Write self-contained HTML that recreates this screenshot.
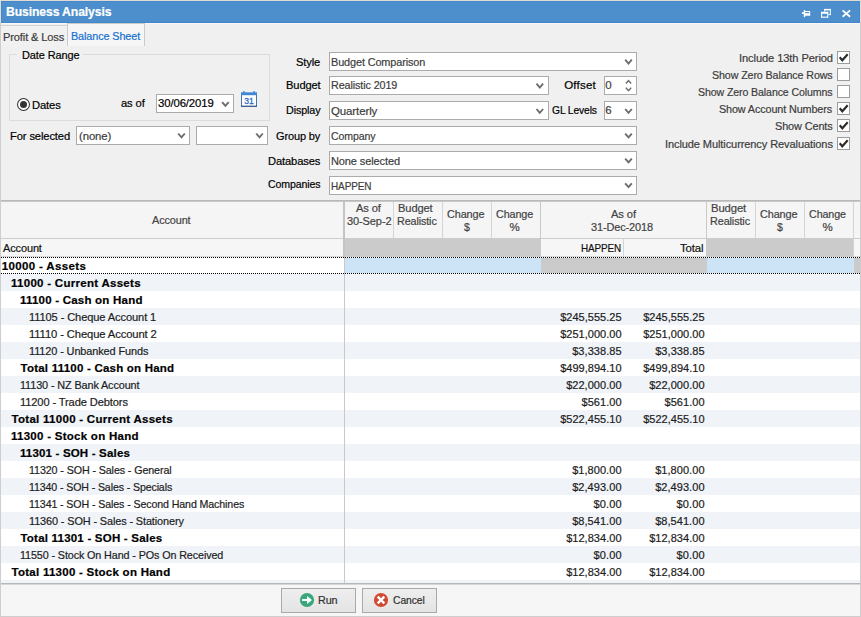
<!DOCTYPE html>
<html>
<head>
<meta charset="utf-8">
<title>Business Analysis</title>
<style>
html,body{margin:0;padding:0;}
body{width:861px;height:617px;overflow:hidden;position:relative;background:#f0f0f0;
  font-family:"Liberation Sans",sans-serif;font-size:11.5px;}
div,span,svg{position:absolute;box-sizing:border-box;}
.t{white-space:pre;line-height:14px;height:14px;transform-origin:0 0;-webkit-text-stroke:0.2px currentColor;}
.win{left:0;top:0;width:861px;height:617px;border:1px solid #cecece;border-top-color:#e2dbd4;z-index:50;}
.wint{left:0;top:0;width:861px;height:23px;border-left:1px solid #e2dbd4;border-right:1px solid #e2dbd4;z-index:51;}
.title{left:1px;top:1px;width:859px;height:22px;background:#4d8fcc;border:1px solid #4688cb;border-bottom-color:#4185cb;}
.hl{left:1px;top:23px;width:859px;height:1px;background:#fbf8f4;}
.tab1{left:1px;top:25px;width:67px;height:21px;border-top:1px solid #d2d2d2;background:#f1f1f1;}
.tab2{left:67px;top:23px;width:78px;height:23px;border:1px solid #cbcbcb;border-bottom:none;background:#f6f6f6;}
.grp{left:9px;top:54px;width:261px;height:67px;border:1px solid #dcdcdc;}
.grpcap{left:17px;top:50px;width:66px;height:10px;background:#f0f0f0;}
.in{background:#fff;border:1px solid #ababab;height:19px;}
.cb{width:13px;height:13px;left:837px;background:#fff;border:1px solid #9c9c9c;}
.radio{left:17px;top:98px;width:13px;height:13px;border-radius:50%;border:1px solid #333;background:#fff;}
.radio i{position:absolute;left:2.5px;top:2.5px;width:6px;height:6px;border-radius:50%;background:#333;}
.btn{top:588px;width:75px;height:25px;background:linear-gradient(#eeeeee,#e4e4e4);border:1px solid #a9a9a9;}
/* grid */
.ghead{left:1px;top:202px;width:859px;height:36px;background:#f5f5f5;}
.gtop{left:1px;top:200px;width:859px;height:2px;background:linear-gradient(#b9b9b9 50%,#c8c8c8 50%);}
.vl{width:1px;background:#d4d4d4;}
.hlg{height:1px;background:#cdcdcd;}
.gray{background:#cbcbcb;}
.blue{background:#cde4f7;}
.row{left:1px;width:859px;height:17px;background:#fff;}
.row.a{background:#f0f4f9;}
.dot{left:1px;width:859px;height:1px;background:repeating-linear-gradient(90deg,#000 0,#000 1px,transparent 1px,transparent 2px);}
</style>
</head>
<body>
<div class="title"></div>
<div class="hl"></div>
<div class="tab1"></div>
<div class="tab2"></div>

<!-- title icons -->
<svg style="left:0;top:0" width="861" height="24" viewBox="0 0 861 24">
  <g fill="#fff">
    <!-- pin -->
    <rect x="801.9" y="12.3" width="3" height="1.7"/>
    <rect x="803.8" y="10.1" width="1.4" height="7"/>
    <rect x="805" y="11" width="5.1" height="1"/>
    <rect x="809.1" y="11" width="1" height="4.7"/>
    <rect x="805" y="13.2" width="5.1" height="2.5"/>
    <!-- restore -->
    <rect x="824.2" y="8.9" width="6.6" height="1.5"/>
    <rect x="829.8" y="8.9" width="1" height="6.2"/>
    <rect x="824.2" y="8.9" width="1" height="2.9"/>
    <rect x="828.2" y="14.2" width="2.6" height="0.9"/>
    <rect x="821.1" y="11.8" width="7.1" height="2"/>
    <rect x="821.1" y="16.6" width="7.1" height="1.1"/>
    <rect x="821.1" y="11.8" width="1" height="5.9"/>
    <rect x="827.2" y="11.8" width="1" height="5.9"/>
  </g>
  <!-- close -->
  <path d="M842.6 10.4L850.1 16.7 M850.1 10.4L842.6 16.7" fill="none" stroke="#fff" stroke-width="1.8"/>
</svg>

<!-- group box -->
<div class="grp"></div>
<div class="grpcap"></div>
<svg style="left:15px;top:96px" width="17" height="17" viewBox="0 0 17 17"><circle cx="8.5" cy="8.5" r="5.95" fill="#fff" stroke="#333" stroke-width="1.05"/><circle cx="8.5" cy="8.5" r="3.5" fill="#333"/></svg>

<!-- inputs -->
<div class="in" style="left:156px;top:94px;width:78px"></div>
<div class="in" style="left:76px;top:126px;width:114px"></div>
<div class="in" style="left:196px;top:126px;width:72px"></div>
<div class="in" style="left:329px;top:52px;width:308px"></div>
<div class="in" style="left:329px;top:76px;width:220px"></div>
<div class="in" style="left:329px;top:101px;width:220px"></div>
<div class="in" style="left:329px;top:126px;width:308px"></div>
<div class="in" style="left:329px;top:151px;width:308px"></div>
<div class="in" style="left:329px;top:176px;width:308px"></div>
<div class="in" style="left:604px;top:76px;width:33px"></div>
<div class="in" style="left:604px;top:101px;width:33px"></div>

<svg style="left:0;top:0" width="861" height="200" viewBox="0 0 861 200"><path d="M222.10 102.10L225.40 105.90L228.70 102.10" fill="none" stroke="#6c6c6c" stroke-width="1.9"/><path d="M178.20 133.50L181.50 137.30L184.80 133.50" fill="none" stroke="#6c6c6c" stroke-width="1.9"/><path d="M256.20 133.50L259.50 137.30L262.80 133.50" fill="none" stroke="#6c6c6c" stroke-width="1.9"/><path d="M625.20 59.70L628.50 63.50L631.80 59.70" fill="none" stroke="#6c6c6c" stroke-width="1.9"/><path d="M536.50 83.70L539.80 87.50L543.10 83.70" fill="none" stroke="#6c6c6c" stroke-width="1.9"/><path d="M536.50 109.00L539.80 112.80L543.10 109.00" fill="none" stroke="#6c6c6c" stroke-width="1.9"/><path d="M625.20 109.00L628.50 112.80L631.80 109.00" fill="none" stroke="#6c6c6c" stroke-width="1.9"/><path d="M625.20 133.60L628.50 137.40L631.80 133.60" fill="none" stroke="#6c6c6c" stroke-width="1.9"/><path d="M625.20 158.60L628.50 162.40L631.80 158.60" fill="none" stroke="#6c6c6c" stroke-width="1.9"/><path d="M625.20 183.30L628.50 187.10L631.80 183.30" fill="none" stroke="#6c6c6c" stroke-width="1.9"/><path d="M625.90 83.50L628.50 80.50L631.10 83.50" fill="none" stroke="#6c6c6c" stroke-width="1.4"/><path d="M625.90 87.80L628.50 90.80L631.10 87.80" fill="none" stroke="#6c6c6c" stroke-width="1.4"/></svg>

<!-- calendar icon -->
<svg style="left:241px;top:91px" width="17" height="17" viewBox="0 0 17 17">
  <rect x="0.5" y="3.5" width="15" height="12" fill="#fff" stroke="#4a73a8"/>
  <rect x="0" y="14.6" width="16" height="1.4" fill="#3d6296"/>
  <rect x="0" y="1.3" width="16" height="2.9" fill="#3f86d6"/>
  <rect x="2.2" y="0" width="1.4" height="3" fill="#3f86d6"/>
  <rect x="12.4" y="0" width="1.4" height="3" fill="#3f86d6"/>
  <text x="8" y="13.3" font-family="Liberation Sans" font-size="8.5" fill="#2a6cc4" text-anchor="middle" stroke="#2a6cc4" stroke-width="0.3">31</text>
</svg>

<!-- checkboxes -->
<div class="cb" style="top:51px"></div>
<div class="cb" style="top:68px"></div>
<div class="cb" style="top:85px"></div>
<div class="cb" style="top:102px"></div>
<div class="cb" style="top:119px"></div>
<div class="cb" style="top:137px"></div>
<svg style="left:0;top:0" width="861" height="200" viewBox="0 0 861 200"><path d="M839.7 57.3L842.3 60.3L847.7 54.3" fill="none" stroke="#2b2b2b" stroke-width="2.1"/><path d="M839.7 108.3L842.3 111.3L847.7 105.3" fill="none" stroke="#2b2b2b" stroke-width="2.1"/><path d="M839.7 125.3L842.3 128.3L847.7 122.3" fill="none" stroke="#2b2b2b" stroke-width="2.1"/><path d="M839.7 143.3L842.3 146.3L847.7 140.3" fill="none" stroke="#2b2b2b" stroke-width="2.1"/></svg>

<!-- grid -->
<div class="gtop"></div>
<div class="ghead"></div>
<div class="row" style="top:257px;height:17px"></div>
<div class="row a" style="top:274px;height:17px"></div>
<div class="row" style="top:291px;height:17px"></div>
<div class="row a" style="top:308px;height:17px"></div>
<div class="row" style="top:325px;height:17px"></div>
<div class="row a" style="top:342px;height:17px"></div>
<div class="row" style="top:359px;height:17px"></div>
<div class="row a" style="top:376px;height:17px"></div>
<div class="row" style="top:393px;height:17px"></div>
<div class="row a" style="top:410px;height:17px"></div>
<div class="row" style="top:427px;height:17px"></div>
<div class="row a" style="top:444px;height:17px"></div>
<div class="row" style="top:461px;height:17px"></div>
<div class="row a" style="top:478px;height:17px"></div>
<div class="row" style="top:495px;height:17px"></div>
<div class="row a" style="top:512px;height:17px"></div>
<div class="row" style="top:529px;height:17px"></div>
<div class="row a" style="top:546px;height:17px"></div>
<div class="row" style="top:563px;height:17px"></div>
<div class="row a" style="top:580px;height:3px"></div>
<div style="left:1px;top:239px;width:859px;height:18px;background:#f6f6f6;border-bottom:1px solid #d6d6d6"></div>
<div class="hlg" style="left:1px;top:238px;width:859px"></div>
<div class="gray" style="left:345px;top:239px;width:195px;height:18px"></div>
<div class="gray" style="left:707px;top:239px;width:146px;height:18px"></div>
<div class="blue" style="left:345px;top:258px;width:196px;height:15px"></div>
<div class="gray" style="left:541px;top:258px;width:166px;height:15px"></div>
<div class="blue" style="left:707px;top:258px;width:147px;height:15px"></div>
<div class="gray" style="left:854px;top:258px;width:6px;height:15px"></div>
<div class="dot" style="top:257px"></div>
<div class="dot" style="top:273px"></div>
<div class="vl" style="left:393px;top:202px;height:36px"></div>
<div class="vl" style="left:442px;top:202px;height:36px"></div>
<div class="vl" style="left:491px;top:202px;height:36px"></div>
<div class="vl" style="left:755px;top:202px;height:36px"></div>
<div class="vl" style="left:804px;top:202px;height:36px"></div>
<div class="vl" style="left:540px;top:202px;height:55px;background:#c9c9c9"></div>
<div class="vl" style="left:706px;top:202px;height:55px;background:#c9c9c9"></div>
<div class="vl" style="left:853px;top:202px;height:55px"></div>
<div class="vl" style="left:623px;top:239px;height:18px"></div>
<div class="vl" style="left:343px;top:202px;width:2px;height:55px;background:#c4c4c4"></div>
<div class="vl" style="left:344px;top:257px;height:326px;background:#c9c9c9"></div>

<!-- buttons -->
<div style="left:1px;top:583px;width:859px;height:33px;background:#f6f6f6;border-top:1px solid #b7b7b7"></div>
<div class="hlg" style="left:1px;top:584px;width:859px;background:#d6d6d6"></div>
<div class="btn" style="left:281px"></div>
<div class="btn" style="left:362px"></div>
<svg style="left:299px;top:592px" width="16" height="16" viewBox="0 0 16 16">
  <circle cx="8" cy="8" r="7.1" fill="#3aa67c"/>
  <path d="M3.1 7H8.1V4L13 8L8.1 12V9H3.1Z" fill="#fff"/>
</svg>
<svg style="left:373px;top:592px" width="16" height="16" viewBox="0 0 16 16">
  <circle cx="8" cy="8" r="7.1" fill="#d14a31"/>
  <path d="M4.7 4.7L11.3 11.3 M11.3 4.7L4.7 11.3" fill="none" stroke="#fff" stroke-width="2.4"/>
</svg>

<span class="t" style="left:5.88px;top:4.70px;font-size:13px;color:#fff;letter-spacing:-0.120px;transform:scaleX(0.9376);font-weight:bold;">Business Analysis</span>
<span class="t" style="left:2.59px;top:30.02px;font-size:11.5px;color:#3c3c3c;letter-spacing:-0.120px;transform:scaleX(0.9616);">Profit &amp; Loss</span>
<span class="t" style="left:70.61px;top:28.52px;font-size:11.5px;color:#1570cf;letter-spacing:-0.120px;transform:scaleX(0.9428);">Balance Sheet</span>
<span class="t" style="left:22.00px;top:47.72px;font-size:11.5px;color:#000;letter-spacing:-0.120px;transform:scaleX(0.9534);">Date Range</span>
<span class="t" style="left:31.88px;top:97.62px;font-size:11.5px;color:#000;letter-spacing:-0.120px;transform:scaleX(0.9751);">Dates</span>
<span class="t" style="left:121.23px;top:95.82px;font-size:11.5px;color:#000;letter-spacing:-0.120px;transform:scaleX(0.9716);">as of</span>
<span class="t" style="left:158.17px;top:96.22px;font-size:11.5px;color:#000;letter-spacing:-0.120px;transform:scaleX(0.9875);">30/06/2019</span>
<span class="t" style="left:9.68px;top:128.72px;font-size:11.5px;color:#000;letter-spacing:-0.120px;transform:scaleX(0.9706);">For selected</span>
<span class="t" style="left:78.59px;top:128.72px;font-size:11.5px;color:#3c3c3c;letter-spacing:-0.120px;transform:scaleX(0.9899);">(none)</span>
<span class="t" style="left:296.19px;top:55.02px;font-size:11.5px;color:#000;letter-spacing:-0.120px;transform:scaleX(0.9687);">Style</span>
<span class="t" style="left:285.79px;top:78.02px;font-size:11.5px;color:#000;letter-spacing:-0.120px;transform:scaleX(0.9678);">Budget</span>
<span class="t" style="left:285.82px;top:103.22px;font-size:11.5px;color:#000;letter-spacing:-0.120px;transform:scaleX(0.9356);">Display</span>
<span class="t" style="left:276.15px;top:129.02px;font-size:11.5px;color:#000;letter-spacing:-0.120px;transform:scaleX(0.9529);">Group by</span>
<span class="t" style="left:268.38px;top:154.02px;font-size:11.5px;color:#000;letter-spacing:-0.120px;transform:scaleX(0.9704);">Databases</span>
<span class="t" style="left:268.26px;top:177.02px;font-size:11.5px;color:#000;letter-spacing:-0.120px;transform:scaleX(0.9180);">Companies</span>
<span class="t" style="left:330.61px;top:55.02px;font-size:11.5px;color:#3c3c3c;letter-spacing:-0.120px;transform:scaleX(0.9456);">Budget Comparison</span>
<span class="t" style="left:330.62px;top:78.02px;font-size:11.5px;color:#3c3c3c;letter-spacing:-0.120px;transform:scaleX(0.9380);">Realistic 2019</span>
<span class="t" style="left:330.96px;top:103.52px;font-size:11.5px;color:#3c3c3c;letter-spacing:-0.116px;">Quarterly</span>
<span class="t" style="left:330.96px;top:129.02px;font-size:11.5px;color:#3c3c3c;letter-spacing:-0.120px;transform:scaleX(0.9167);">Company</span>
<span class="t" style="left:330.60px;top:154.02px;font-size:11.5px;color:#3c3c3c;letter-spacing:-0.120px;transform:scaleX(0.9574);">None selected</span>
<span class="t" style="left:330.68px;top:178.72px;font-size:11.5px;color:#3c3c3c;letter-spacing:-0.120px;transform:scaleX(0.8659);">HAPPEN</span>
<span class="t" style="left:564.16px;top:78.02px;font-size:11.5px;color:#000;letter-spacing:0.212px;">Offset</span>
<span class="t" style="left:551.98px;top:102.72px;font-size:11.5px;color:#000;letter-spacing:-0.120px;transform:scaleX(0.8931);">GL Levels</span>
<span class="t" style="left:605.30px;top:78.02px;font-size:11.5px;color:#3c3c3c;">0</span>
<span class="t" style="left:605.26px;top:102.72px;font-size:11.5px;color:#3c3c3c;">6</span>
<span class="t" style="left:738.97px;top:51.02px;font-size:11.5px;color:#3c3c3c;letter-spacing:-0.120px;transform:scaleX(0.9702);">Include 13th Period</span>
<span class="t" style="left:712.01px;top:68.02px;font-size:11.5px;color:#3c3c3c;letter-spacing:-0.120px;transform:scaleX(0.9297);">Show Zero Balance Rows</span>
<span class="t" style="left:698.02px;top:85.02px;font-size:11.5px;color:#3c3c3c;letter-spacing:-0.120px;transform:scaleX(0.9220);">Show Zero Balance Columns</span>
<span class="t" style="left:719.01px;top:102.02px;font-size:11.5px;color:#3c3c3c;letter-spacing:-0.120px;transform:scaleX(0.9389);">Show Account Numbers</span>
<span class="t" style="left:775.01px;top:119.02px;font-size:11.5px;color:#3c3c3c;letter-spacing:-0.120px;transform:scaleX(0.9469);">Show Cents</span>
<span class="t" style="left:664.78px;top:137.02px;font-size:11.5px;color:#3c3c3c;letter-spacing:-0.120px;transform:scaleX(0.9630);">Include Multicurrency Revaluations</span>
<span class="t" style="left:152.48px;top:213.02px;font-size:11.5px;color:#424242;letter-spacing:-0.120px;transform:scaleX(0.9453);">Account</span>
<span class="t" style="left:355.98px;top:201.02px;font-size:11.5px;color:#424242;letter-spacing:-0.120px;transform:scaleX(0.9642);">As of</span>
<span class="t" style="left:346.68px;top:214.02px;font-size:11.5px;color:#424242;letter-spacing:-0.120px;transform:scaleX(0.9593);">30-Sep-2</span>
<span class="t" style="left:397.89px;top:201.02px;font-size:11.5px;color:#424242;letter-spacing:-0.120px;transform:scaleX(0.9678);">Budget</span>
<span class="t" style="left:396.92px;top:214.02px;font-size:11.5px;color:#424242;letter-spacing:-0.120px;transform:scaleX(0.9358);">Realistic</span>
<span class="t" style="left:447.05px;top:207.02px;font-size:11.5px;color:#424242;letter-spacing:-0.120px;transform:scaleX(0.9433);">Change</span>
<span class="t" style="left:464.11px;top:220.36px;font-size:10.5px;color:#424242;">$</span>
<span class="t" style="left:496.15px;top:207.02px;font-size:11.5px;color:#424242;letter-spacing:-0.120px;transform:scaleX(0.9381);">Change</span>
<span class="t" style="left:509.54px;top:220.02px;font-size:11.5px;color:#424242;">%</span>
<span class="t" style="left:610.68px;top:207.02px;font-size:11.5px;color:#424242;letter-spacing:-0.120px;transform:scaleX(0.9720);">As of</span>
<span class="t" style="left:591.48px;top:220.02px;font-size:11.5px;color:#424242;letter-spacing:-0.120px;transform:scaleX(0.9511);">31-Dec-2018</span>
<span class="t" style="left:710.67px;top:201.02px;font-size:11.5px;color:#424242;letter-spacing:-0.120px;transform:scaleX(0.9822);">Budget</span>
<span class="t" style="left:709.81px;top:214.02px;font-size:11.5px;color:#424242;letter-spacing:-0.120px;transform:scaleX(0.9430);">Realistic</span>
<span class="t" style="left:759.85px;top:207.02px;font-size:11.5px;color:#424242;letter-spacing:-0.120px;transform:scaleX(0.9459);">Change</span>
<span class="t" style="left:776.91px;top:220.36px;font-size:10.5px;color:#424242;">$</span>
<span class="t" style="left:809.26px;top:207.02px;font-size:11.5px;color:#424242;letter-spacing:-0.120px;transform:scaleX(0.9329);">Change</span>
<span class="t" style="left:822.54px;top:220.02px;font-size:11.5px;color:#424242;">%</span>
<span class="t" style="left:3.18px;top:241.02px;font-size:11.5px;color:#111;letter-spacing:-0.120px;transform:scaleX(0.9527);">Account</span>
<span class="t" style="left:580.89px;top:241.02px;font-size:11.5px;color:#111;letter-spacing:-0.120px;transform:scaleX(0.8592);">HAPPEN</span>
<span class="t" style="left:680.24px;top:241.02px;font-size:11.5px;color:#111;letter-spacing:-0.120px;transform:scaleX(0.9919);">Total</span>
<span class="t" style="left:1.68px;top:258.72px;font-size:11.5px;color:#000;letter-spacing:0.360px;font-weight:bold;">10000 - Assets</span>
<span class="t" style="left:10.98px;top:275.72px;font-size:11.5px;color:#000;letter-spacing:0.285px;font-weight:bold;">11000 - Current Assets</span>
<span class="t" style="left:19.98px;top:292.72px;font-size:11.5px;color:#000;letter-spacing:0.223px;font-weight:bold;">11100 - Cash on Hand</span>
<span class="t" style="left:28.95px;top:309.72px;font-size:11.5px;color:#1c1c1c;letter-spacing:-0.120px;transform:scaleX(0.9663);">11105 - Cheque Account 1</span>
<span class="t" style="left:560.18px;top:309.89px;font-size:11px;color:#1c1c1c;letter-spacing:0.021px;">$245,555.25</span>
<span class="t" style="left:643.18px;top:309.89px;font-size:11px;color:#1c1c1c;letter-spacing:0.021px;">$245,555.25</span>
<span class="t" style="left:28.94px;top:326.72px;font-size:11.5px;color:#1c1c1c;letter-spacing:-0.120px;transform:scaleX(0.9766);">11110 - Cheque Account 2</span>
<span class="t" style="left:560.18px;top:326.89px;font-size:11px;color:#1c1c1c;letter-spacing:0.018px;">$251,000.00</span>
<span class="t" style="left:643.18px;top:326.89px;font-size:11px;color:#1c1c1c;letter-spacing:0.018px;">$251,000.00</span>
<span class="t" style="left:28.97px;top:343.72px;font-size:11.5px;color:#1c1c1c;letter-spacing:-0.120px;transform:scaleX(0.9512);">11120 - Unbanked Funds</span>
<span class="t" style="left:572.18px;top:343.89px;font-size:11px;color:#1c1c1c;letter-spacing:0.056px;">$3,338.85</span>
<span class="t" style="left:655.18px;top:343.89px;font-size:11px;color:#1c1c1c;letter-spacing:0.056px;">$3,338.85</span>
<span class="t" style="left:20.57px;top:360.72px;font-size:11.5px;color:#000;letter-spacing:0.221px;font-weight:bold;">Total 11100 - Cash on Hand</span>
<span class="t" style="left:560.18px;top:360.89px;font-size:11px;color:#1c1c1c;letter-spacing:0.018px;">$499,894.10</span>
<span class="t" style="left:643.18px;top:360.89px;font-size:11px;color:#1c1c1c;letter-spacing:0.018px;">$499,894.10</span>
<span class="t" style="left:20.27px;top:377.72px;font-size:11.5px;color:#1c1c1c;letter-spacing:-0.120px;transform:scaleX(0.9432);">11130 - NZ Bank Account</span>
<span class="t" style="left:566.18px;top:377.89px;font-size:11px;color:#1c1c1c;letter-spacing:0.033px;">$22,000.00</span>
<span class="t" style="left:649.18px;top:377.89px;font-size:11px;color:#1c1c1c;letter-spacing:0.033px;">$22,000.00</span>
<span class="t" style="left:20.05px;top:394.72px;font-size:11.5px;color:#1c1c1c;letter-spacing:-0.120px;transform:scaleX(0.9654);">11200 - Trade Debtors</span>
<span class="t" style="left:581.53px;top:394.89px;font-size:11px;color:#1c1c1c;letter-spacing:0.039px;">$561.00</span>
<span class="t" style="left:664.53px;top:394.89px;font-size:11px;color:#1c1c1c;letter-spacing:0.039px;">$561.00</span>
<span class="t" style="left:11.57px;top:411.72px;font-size:11.5px;color:#000;letter-spacing:0.281px;font-weight:bold;">Total 11000 - Current Assets</span>
<span class="t" style="left:560.18px;top:411.89px;font-size:11px;color:#1c1c1c;letter-spacing:0.018px;">$522,455.10</span>
<span class="t" style="left:643.18px;top:411.89px;font-size:11px;color:#1c1c1c;letter-spacing:0.018px;">$522,455.10</span>
<span class="t" style="left:10.98px;top:428.72px;font-size:11.5px;color:#000;letter-spacing:0.271px;font-weight:bold;">11300 - Stock on Hand</span>
<span class="t" style="left:19.88px;top:445.72px;font-size:11.5px;color:#000;letter-spacing:0.180px;font-weight:bold;">11301 - SOH - Sales</span>
<span class="t" style="left:29.08px;top:462.72px;font-size:11.5px;color:#1c1c1c;letter-spacing:-0.120px;transform:scaleX(0.9321);">11320 - SOH - Sales - General</span>
<span class="t" style="left:572.18px;top:462.89px;font-size:11px;color:#1c1c1c;letter-spacing:0.051px;">$1,800.00</span>
<span class="t" style="left:655.18px;top:462.89px;font-size:11px;color:#1c1c1c;letter-spacing:0.051px;">$1,800.00</span>
<span class="t" style="left:29.09px;top:479.72px;font-size:11.5px;color:#1c1c1c;letter-spacing:-0.120px;transform:scaleX(0.9211);">11340 - SOH - Sales - Specials</span>
<span class="t" style="left:572.18px;top:479.89px;font-size:11px;color:#1c1c1c;letter-spacing:0.051px;">$2,493.00</span>
<span class="t" style="left:655.18px;top:479.89px;font-size:11px;color:#1c1c1c;letter-spacing:0.051px;">$2,493.00</span>
<span class="t" style="left:29.09px;top:496.72px;font-size:11.5px;color:#1c1c1c;letter-spacing:-0.120px;transform:scaleX(0.9254);">11341 - SOH - Sales - Second Hand Machines</span>
<span class="t" style="left:593.53px;top:496.89px;font-size:11px;color:#1c1c1c;letter-spacing:0.118px;">$0.00</span>
<span class="t" style="left:676.53px;top:496.89px;font-size:11px;color:#1c1c1c;letter-spacing:0.118px;">$0.00</span>
<span class="t" style="left:29.07px;top:513.72px;font-size:11.5px;color:#1c1c1c;letter-spacing:-0.120px;transform:scaleX(0.9469);">11360 - SOH - Sales - Stationery</span>
<span class="t" style="left:572.18px;top:513.89px;font-size:11px;color:#1c1c1c;letter-spacing:0.051px;">$8,541.00</span>
<span class="t" style="left:655.18px;top:513.89px;font-size:11px;color:#1c1c1c;letter-spacing:0.051px;">$8,541.00</span>
<span class="t" style="left:20.47px;top:530.72px;font-size:11.5px;color:#000;letter-spacing:0.214px;font-weight:bold;">Total 11301 - SOH - Sales</span>
<span class="t" style="left:566.18px;top:530.89px;font-size:11px;color:#1c1c1c;letter-spacing:0.033px;">$12,834.00</span>
<span class="t" style="left:649.18px;top:530.89px;font-size:11px;color:#1c1c1c;letter-spacing:0.033px;">$12,834.00</span>
<span class="t" style="left:20.08px;top:547.72px;font-size:11.5px;color:#1c1c1c;letter-spacing:-0.120px;transform:scaleX(0.9368);">11550 - Stock On Hand - POs On Received</span>
<span class="t" style="left:593.53px;top:547.89px;font-size:11px;color:#1c1c1c;letter-spacing:0.118px;">$0.00</span>
<span class="t" style="left:676.53px;top:547.89px;font-size:11px;color:#1c1c1c;letter-spacing:0.118px;">$0.00</span>
<span class="t" style="left:11.57px;top:564.72px;font-size:11.5px;color:#000;letter-spacing:0.258px;font-weight:bold;">Total 11300 - Stock on Hand</span>
<span class="t" style="left:566.18px;top:564.89px;font-size:11px;color:#1c1c1c;letter-spacing:0.033px;">$12,834.00</span>
<span class="t" style="left:649.18px;top:564.89px;font-size:11px;color:#1c1c1c;letter-spacing:0.033px;">$12,834.00</span>
<span class="t" style="left:318.31px;top:593.32px;font-size:11.5px;color:#303030;letter-spacing:-0.120px;transform:scaleX(0.9392);">Run</span>
<span class="t" style="left:392.87px;top:593.32px;font-size:11.5px;color:#303030;letter-spacing:-0.120px;transform:scaleX(0.9042);">Cancel</span>
<div class="win"></div>
<div class="wint"></div>
</body>
</html>
